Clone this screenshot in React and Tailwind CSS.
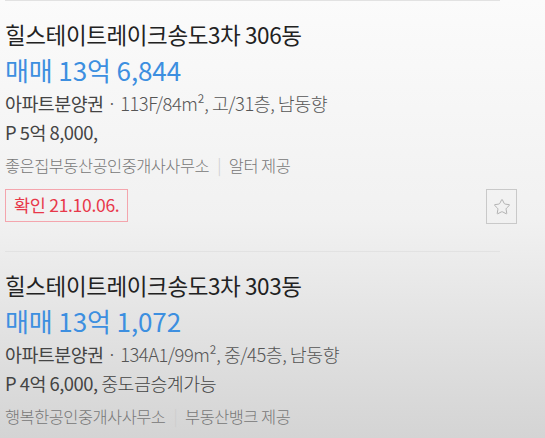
import { Star } from "lucide-react";

const listings = [
  {
    title: "힐스테이트레이크송도3차 306동",
    price: "매매 13억 6,844",
    spec: "113F/84m², 고/31층, 남동향",
    premium: "P 5억 8,000,",
    premiumNote: "",
    agency: "좋은집부동산공인중개사사무소",
    source: "알터 제공",
    confirmed: "21.10.06.",
  },
  {
    title: "힐스테이트레이크송도3차 303동",
    price: "매매 13억 1,072",
    spec: "134A1/99m², 중/45층, 남동향",
    premium: "P 4억 6,000,",
    premiumNote: " 중도금승계가능",
    agency: "행복한공인중개사사무소",
    source: "부동산뱅크 제공",
  },
];

const Listing = ({ title, price, spec, premium, premiumNote, agency, source, confirmed }) => (
  <div className="border-t border-[#e2e2e2] pt-[18px] h-[251px]">
    <h3 className="text-[22.5px] leading-[30px] text-[#222] tracking-[-0.4px]">{title}</h3>
    <p className="mt-[6px] text-[26px] leading-[30px] text-[#3d8fe0] tracking-[-0.1px]">{price}</p>
    <p className="mt-[5px] text-[18.4px] leading-[26px] text-[#555] tracking-[-0.5px]">
      <span className="text-[#444]">아파트분양권</span>
      <span className="font-light"> · {spec}</span>
    </p>
    <p className="mt-[3px] text-[18.4px] leading-[26px] text-[#444] tracking-[-0.5px]">
      {premium}
      <span className="font-light">{premiumNote}</span>
    </p>
    <p className="mt-[8px] text-[16.4px] leading-[24px] text-[#777] tracking-[-0.5px] font-light">
      {agency}
      <span className="mx-[8px] text-[#ccc]">|</span>
      {source}
    </p>
    {confirmed && (
      <div className="mt-[12px] flex items-start justify-between mr-[-17px]">
        <span className="border border-[#f4a5ad] px-[8px] h-[33px] flex items-center text-[17.5px] text-[#e8384a] tracking-[-0.3px]">
          확인 {confirmed}
        </span>
        <button className="w-[31px] h-[35px] border border-[#c9c9c9] flex items-center justify-center">
          <Star size={18} strokeWidth={1.2} className="text-[#aaa]" />
        </button>
      </div>
    )}
  </div>
);

export default function App() {
  return (
    <div
      className="w-[545px] h-[438px] overflow-hidden bg-gradient-to-b from-[#fbfbfb] via-[#f1f1f1] to-[#d4d4d4] pl-[5px] pr-[45px]"
      style={{ fontFamily: '"Noto Sans CJK KR", "Noto Sans", sans-serif' }}
    >
      {listings.map((l) => (
        <Listing key={l.title} {...l} />
      ))}
    </div>
  );
}
